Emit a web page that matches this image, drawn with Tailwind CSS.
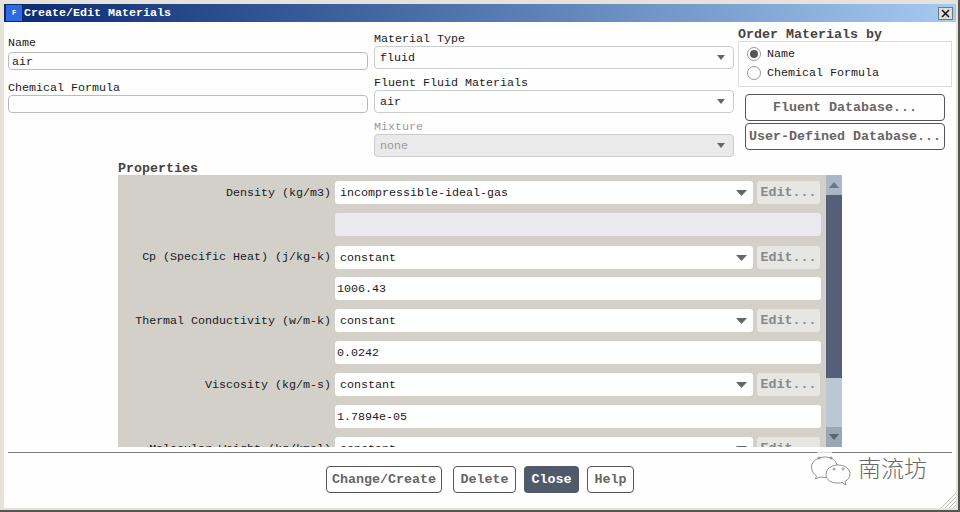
<!DOCTYPE html>
<html><head><meta charset="utf-8"><script src="https://cdn.jsdelivr.net/npm/@tailwindcss/browser@4"></script></head>
<body class="m-0 w-[960px] h-[512px] overflow-hidden font-['Liberation_Mono',monospace] text-[11.67px] leading-[14px] text-[#1a1a1a]">
<div class="w-[960px] h-[512px] pt-[4px] pl-[4px] pr-[2px] pb-[2px] flex flex-col bg-[#e4e2da] border-r-[2px] border-b-[2px] border-[#555]">
<div class="flex-1 flex flex-col bg-[#fefefe] min-h-0 relative">
  <div class="h-[18px] shrink-0 flex items-center bg-linear-to-r from-[#0a2a70] to-[#a6caf0] pl-[2px] pr-[3px]">
    <div class="w-[16px] h-[16px] bg-[#2f6ae0] text-white text-[7px] font-bold flex items-center justify-center">F</div>
    <span class="ml-[2px] text-white font-bold text-[11.67px]">Create/Edit Materials</span>
    <div class="ml-auto w-[15px] h-[13px] bg-[#dcdcd8] border border-[#777] flex items-center justify-center">
      <svg width="9" height="9" viewBox="0 0 9 9"><path d="M1 1L8 8M8 1L1 8" stroke="#111" stroke-width="1.5"/></svg>
    </div>
  </div>
  <div class="flex pl-[4px] h-[131px] shrink-0">
    <div class="w-[360px] shrink-0 pt-[14px]">
      <div class="h-[16px]">Name</div>
      <div class="h-[18px] rounded-[4px] border border-[#bbb] pl-[3px] leading-[18px]">air</div>
      <div class="h-[16px] mt-[11px]">Chemical Formula</div>
      <div class="h-[18px] -mt-[2px] rounded-[4px] border border-[#bbb]"></div>
    </div>
    <div class="w-[360px] shrink-0 ml-[6px] pt-[10px]">
      <div class="h-[14px]">Material Type</div>
      <div class="h-[23px] rounded-[4px] border border-[#ccc] pl-[5px] pr-[7px] pt-px flex items-center justify-between">fluid<svg width="10" height="6" viewBox="0 0 10 6"><path d="M1 0H9L5 5Z" fill="#666"/></svg></div>
      <div class="h-[14px] mt-[7px] leading-[15px]">Fluent Fluid Materials</div>
      <div class="h-[23px] rounded-[4px] border border-[#ccc] pl-[5px] pr-[7px] pt-px flex items-center justify-between">air<svg width="10" height="6" viewBox="0 0 10 6"><path d="M1 0H9L5 5Z" fill="#666"/></svg></div>
      <div class="h-[14px] mt-[7px] leading-[15px] text-[#999]">Mixture</div>
      <div class="h-[23px] rounded-[4px] border border-[#ccc] bg-[#eaeaea] text-[#999] pl-[5px] pr-[7px] pt-px flex items-center justify-between">none<svg width="10" height="6" viewBox="0 0 10 6"><path d="M1 0H9L5 5Z" fill="#666"/></svg></div>
    </div>
    <div class="w-[214px] shrink-0 ml-[4px] pt-[5px]">
      <div class="h-[14px] font-bold text-[13.33px] text-[#444] leading-[16px]">Order Materials by</div>
      <div class="h-[46px] border border-[#ddd] pl-[8px] pt-[3px]">
        <div class="h-[18px] flex items-center gap-[6px]"><span class="w-[14px] h-[14px] rounded-full border border-[#999] flex items-center justify-center"><span class="w-[8px] h-[8px] rounded-full bg-[#555]"></span></span>Name</div>
        <div class="h-[19px] flex items-center gap-[6px]"><span class="w-[14px] h-[14px] rounded-full border border-[#999]"></span>Chemical Formula</div>
      </div>
      <div class="ml-[7px] w-[200px] mt-[7px] flex flex-col gap-[2px] font-bold text-[13.33px] text-[#666]">
        <div class="h-[27px] pt-px rounded-[4px] border border-[#555] flex items-center justify-center">Fluent Database...</div>
        <div class="h-[27px] pt-px rounded-[4px] border border-[#555] flex items-center justify-center whitespace-nowrap">User-Defined Database...</div>
      </div>
    </div>
  </div>
  <div class="ml-[114px] h-[22px] shrink-0 font-bold text-[13.33px] text-[#444] leading-[16px] pt-[8px]">Properties</div>
  <div class="ml-[114px] w-[724px] h-[272px] shrink-0 flex bg-[#d2d0c9] overflow-hidden">
    <div class="w-[708px] pt-[6px] flex flex-col gap-[9px] overflow-hidden">
      <div class="flex h-[23px] shrink-0 items-center"><div class="w-[217px] text-right pr-[4px] whitespace-nowrap">Density (kg/m3)</div><div class="w-[418px] h-[23px] rounded-[3px] bg-white pl-[5px] pr-[6px] pt-px flex items-center justify-between">incompressible-ideal-gas<svg width="11" height="6" viewBox="0 0 11 6"><path d="M0 0H11L5.500 6Z" fill="#666"/></svg></div><div class="ml-[4px] w-[63px] h-[23px] pt-px rounded-[3px] bg-[#e6e6e3] text-[#888] font-bold text-[13.33px] flex items-center justify-center">Edit...</div></div>
      <div class="ml-[217px] w-[486px] h-[23px] shrink-0 rounded-[3px] bg-[#e9e9ee]"></div>
      <div class="flex h-[23px] shrink-0 items-center pt-px"><div class="w-[217px] text-right pr-[4px] whitespace-nowrap">Cp (Specific Heat) (j/kg-k)</div><div class="w-[418px] h-[23px] rounded-[3px] bg-white pl-[5px] pr-[6px] pt-px flex items-center justify-between">constant<svg width="11" height="6" viewBox="0 0 11 6"><path d="M0 0H11L5.500 6Z" fill="#666"/></svg></div><div class="ml-[4px] w-[63px] h-[23px] pt-px rounded-[3px] bg-[#e6e6e3] text-[#888] font-bold text-[13.33px] flex items-center justify-center">Edit...</div></div>
      <div class="ml-[217px] w-[486px] h-[23px] shrink-0 rounded-[3px] bg-white pl-[2px] pt-px flex items-center">1006.43</div>
      <div class="flex h-[23px] shrink-0 items-center"><div class="w-[217px] text-right pr-[4px] whitespace-nowrap">Thermal Conductivity (w/m-k)</div><div class="w-[418px] h-[23px] rounded-[3px] bg-white pl-[5px] pr-[6px] pt-px flex items-center justify-between">constant<svg width="11" height="6" viewBox="0 0 11 6"><path d="M0 0H11L5.500 6Z" fill="#666"/></svg></div><div class="ml-[4px] w-[63px] h-[23px] pt-px rounded-[3px] bg-[#e6e6e3] text-[#888] font-bold text-[13.33px] flex items-center justify-center">Edit...</div></div>
      <div class="ml-[217px] w-[486px] h-[23px] shrink-0 rounded-[3px] bg-white pl-[2px] flex items-center">0.0242</div>
      <div class="flex h-[23px] shrink-0 items-center"><div class="w-[217px] text-right pr-[4px] whitespace-nowrap">Viscosity (kg/m-s)</div><div class="w-[418px] h-[23px] rounded-[3px] bg-white pl-[5px] pr-[6px] pt-px flex items-center justify-between">constant<svg width="11" height="6" viewBox="0 0 11 6"><path d="M0 0H11L5.500 6Z" fill="#666"/></svg></div><div class="ml-[4px] w-[63px] h-[23px] pt-px rounded-[3px] bg-[#e6e6e3] text-[#888] font-bold text-[13.33px] flex items-center justify-center">Edit...</div></div>
      <div class="ml-[217px] w-[486px] h-[23px] shrink-0 rounded-[3px] bg-white pl-[2px] flex items-center">1.7894e-05</div>
      <div class="flex h-[23px] shrink-0 items-center"><div class="w-[217px] text-right pr-[4px] whitespace-nowrap">Molecular Weight (kg/kmol)</div><div class="w-[418px] h-[23px] rounded-[3px] bg-white pl-[5px] pr-[6px] flex items-center justify-between">constant<svg width="11" height="6" viewBox="0 0 11 6"><path d="M0 0H11L5.500 6Z" fill="#666"/></svg></div><div class="ml-[4px] w-[63px] h-[23px] rounded-[3px] bg-[#e6e6e3] text-[#888] font-bold text-[13.33px] flex items-center justify-center">Edit...</div></div>
    </div>
    <div class="w-[16px] flex flex-col bg-[#b9c8d4]">
      <div class="h-[20px] bg-[#a9b6c4] flex items-center justify-center"><svg width="10" height="6" viewBox="0 0 10 6"><path d="M5 0L10 6H0Z" fill="#66768c"/></svg></div>
      <div class="h-[183px] bg-[#555f78]"></div>
      <div class="flex-1"></div>
      <div class="h-[20px] bg-[#9aa7b5] flex items-center justify-center"><svg width="10" height="6" viewBox="0 0 10 6"><path d="M0 0H10L5 6Z" fill="#55657c"/></svg></div>
    </div>
  </div>
  <div class="ml-[4px] mt-[5px] w-[944px] h-px bg-[#777] shrink-0"></div>
  <div class="flex mt-[13px] h-[27px] shrink-0 pl-[322px] gap-[11px] font-bold text-[13.33px] text-[#666]">
    <div class="w-[116px] pt-px rounded-[4px] border border-[#555] flex items-center justify-center">Change/Create</div>
    <div class="w-[63px] pt-px rounded-[4px] border border-[#555] flex items-center justify-center">Delete</div>
    <div class="w-[55px] pt-px -ml-[3px] rounded-[4px] bg-[#4f5b6b] text-white flex items-center justify-center">Close</div>
    <div class="w-[47px] pt-px -ml-[3px] rounded-[4px] border border-[#555] flex items-center justify-center">Help</div>
  </div>
  <div class="absolute left-[813px] top-[447px] w-[15px] h-[2px] bg-white/70"></div>
  <div class="absolute left-[807px] top-[449px] flex items-center text-[#666]">
    <svg width="40" height="33" viewBox="0 0 40 33" fill="none" stroke="#777" stroke-width="0.8"><path d="M14 4C7 4 .5 8 .5 14c0 4 2 7 5 9l-1 3 5-2c2 .5 4 .6 6 .4"/><path d="M27 12c-7 0-12 4-12 9.500S20 30 27 30c1.500 0 3 0 4-.5l4 2.500-1-3.500c3-1.500 5-4.500 5-7.500C39 16 34 12 27 12z" fill="#fff"/><path d="M14 4c6 0 11 3 12 8"/><circle cx="8" cy="5" r="1"/><circle cx="20" cy="5" r="1"/><circle cx="23" cy="16" r="1"/><circle cx="32" cy="16" r="1"/></svg>
    <span class="ml-[7px] -mt-[5px] font-['Noto_Sans_CJK_SC',sans-serif] text-[23px] leading-[28px] font-light">南流坊</span>
  </div>
  <svg class="absolute right-0 bottom-0" width="16" height="16" viewBox="0 0 16 16" stroke="#aaa" stroke-width="0.8"><path d="M16 1L1 16M16 5L5 16M16 9L9 16M16 13L13 16"/></svg>
</div>
</div>
</body></html>
